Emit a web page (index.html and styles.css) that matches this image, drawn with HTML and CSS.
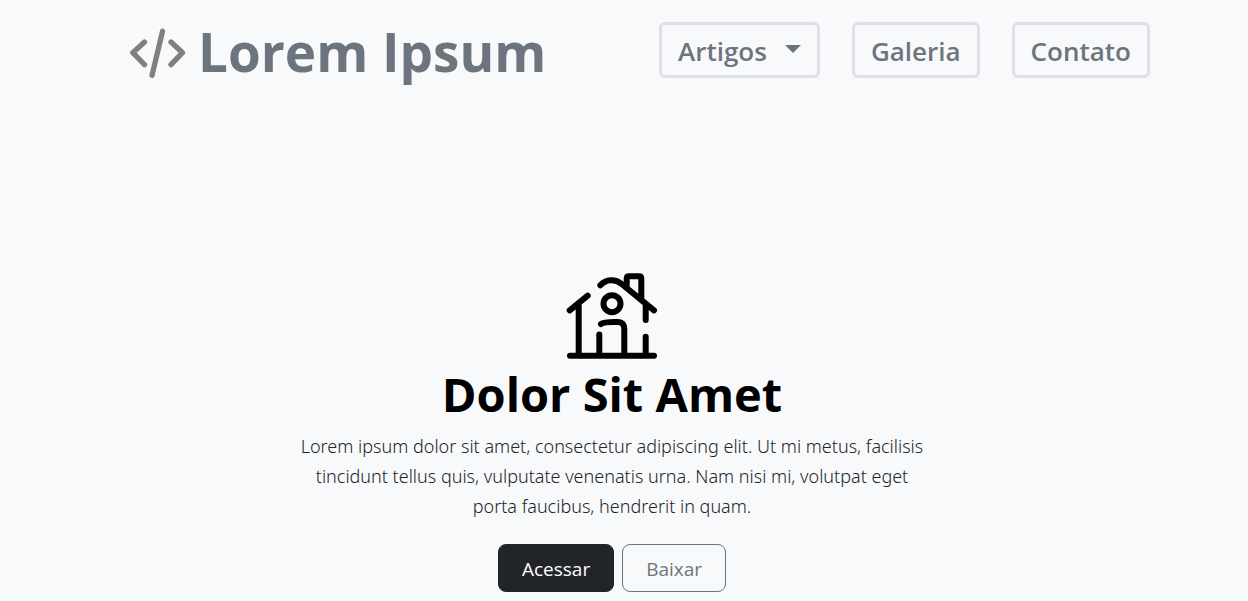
FILE: index.html
```html
<!DOCTYPE html>
<html lang="pt-BR">
<head>
<meta charset="utf-8">
<meta name="viewport" content="width=device-width, initial-scale=1">
<title>Lorem Ipsum</title>
<link rel="stylesheet" href="styles.css">
</head>
<body>
<header class="header">
  <a class="brand" href="#">
    <svg class="brand-icon" viewBox="0 0 56 52" aria-hidden="true">
      <path d="M14.500 16 2.800 26.700l11.700 12M32.500 5.300 22 49.300M41 16l11.500 10.700L41 38.700"/>
    </svg>
    <span>Lorem Ipsum</span>
  </a>
  <nav class="nav">
    <button class="nav-button nav-dropdown" type="button">Artigos<span class="caret"></span></button>
    <button class="nav-button" type="button">Galeria</button>
    <button class="nav-button" type="button">Contato</button>
  </nav>
</header>
<main class="hero">
  <svg class="hero-icon" viewBox="0 0 92 88" aria-hidden="true">
    <path d="M4 83.700H88M12.700 32V83M3.700 38.300 21.700 23.700M34.300 13.300C40 7 49 6.500 55.700 12L88 38.300M60.700 15V6.500Q60.700 4.300 63 4.300H73Q75.300 4.300 75.300 6.500V28M79.700 32V48M79.700 64.700V83M33.300 62.500V83M35 52C37 50.300 43 49.800 52 50Q58.300 50.300 58.300 57V83"/>
    <circle cx="46" cy="31.700" r="8.500"/>
  </svg>
  <h1 class="hero-title">Dolor Sit Amet</h1>
  <p class="hero-text">Lorem ipsum dolor sit amet, consectetur adipiscing elit. Ut mi metus, facilisis tincidunt tellus quis, vulputate venenatis urna. Nam nisi mi, volutpat eget porta faucibus, hendrerit in quam.</p>
  <div class="actions">
    <button class="action action-dark" type="button">Acessar</button>
    <button class="action action-outline" type="button">Baixar</button>
  </div>
</main>
</body>
</html>
```
FILE: styles.css
```css
* {
  box-sizing: border-box;
}

body {
  margin: 0;
  background: #f8f9fb;
  color: #212529;
  font-family: "Open Sans", "Noto Sans", sans-serif;
}

button {
  font-family: inherit;
  white-space: nowrap;
  cursor: pointer;
}

.header {
  display: flex;
  align-items: center;
  justify-content: space-between;
  padding: 16px 98px 0 130px;
}

.brand {
  display: flex;
  align-items: center;
  gap: 12px;
  color: #6c757d;
  font-size: 53px;
  font-weight: 700;
  line-height: 72px;
  text-decoration: none;
  white-space: nowrap;
}

.brand-icon {
  width: 56px;
  height: 52px;
  fill: none;
  stroke: #808080;
  stroke-width: 5.3;
  stroke-linecap: round;
  stroke-linejoin: round;
}

.nav {
  display: flex;
  gap: 32px;
  margin-bottom: 4px;
}

.nav-button {
  padding: 5px 16px 3px;
  border: 3px solid #dee0e6;
  border-radius: 6px;
  background: transparent;
  color: #6c757d;
  font-size: 26px;
  font-weight: 600;
  line-height: 42px;
}

.nav-dropdown {
  display: flex;
  align-items: center;
  gap: 18px;
}

.caret {
  margin-bottom: 4px;
  border-top: 8px solid;
  border-right: 8px solid transparent;
  border-left: 8px solid transparent;
}

.hero {
  display: flex;
  flex-direction: column;
  align-items: center;
  padding: 184px 24px 8px 0;
  text-align: center;
}

.hero-icon {
  width: 92px;
  height: 88px;
  fill: none;
  stroke: #000;
  stroke-width: 6;
  stroke-linecap: round;
  stroke-linejoin: round;
}

.hero-title {
  margin: 5px 0 8px;
  color: #000;
  font-size: 47px;
  font-weight: 700;
  line-height: 58px;
}

.hero-text {
  max-width: 636px;
  margin: 0 0 23px;
  font-family: "Noto Sans", "Open Sans", sans-serif;
  font-size: 18px;
  font-weight: 300;
  line-height: 30px;
}

.actions {
  display: flex;
  gap: 8px;
}

.action {
  padding: 9px 23px 7px;
  border: 1px solid;
  border-radius: 8px;
  font-size: 19px;
  line-height: 30px;
}

.action-dark {
  border-color: #212529;
  background: #212529;
  color: #fff;
}

.action-outline {
  border-color: #6c757d;
  background: transparent;
  color: #6c757d;
}
```
